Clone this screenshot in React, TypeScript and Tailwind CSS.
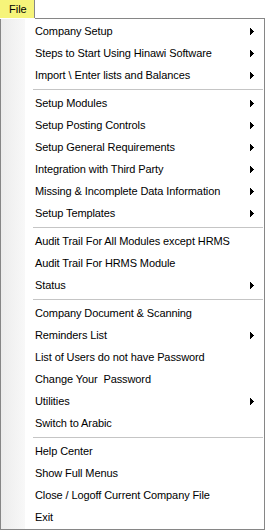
import React from "react";

type Item = { label: string; sub?: boolean };

const groups: Item[][] = [
  [
    { label: "Company Setup", sub: true },
    { label: "Steps to Start Using Hinawi Software", sub: true },
    { label: "Import \\ Enter lists and Balances", sub: true },
  ],
  [
    { label: "Setup Modules", sub: true },
    { label: "Setup Posting Controls", sub: true },
    { label: "Setup General Requirements", sub: true },
    { label: "Integration with Third Party", sub: true },
    { label: "Missing & Incomplete Data Information", sub: true },
    { label: "Setup Templates", sub: true },
  ],
  [
    { label: "Audit Trail For All Modules except HRMS" },
    { label: "Audit Trail For HRMS Module" },
    { label: "Status", sub: true },
  ],
  [
    { label: "Company Document & Scanning" },
    { label: "Reminders List", sub: true },
    { label: "List of Users do not have Password" },
    { label: "Change Your  Password" },
    { label: "Utilities", sub: true },
    { label: "Switch to Arabic" },
  ],
  [
    { label: "Help Center" },
    { label: "Show Full Menus" },
    { label: "Close / Logoff Current Company File" },
    { label: "Exit" },
  ],
];

function SubArrow() {
  return (
    <svg width="4" height="7" viewBox="0 0 4 7" shapeRendering="crispEdges">
      <polygon points="0,0 4,3.5 0,7" fill="#000" />
    </svg>
  );
}

function MenuRow({ item }: { item: Item }) {
  return (
    <div className="flex h-[22px] items-center justify-between pl-[10px] pr-[10px]">
      <span className="whitespace-pre leading-[22px] tracking-[-0.1px]">{item.label}</span>
      {item.sub && <SubArrow />}
    </div>
  );
}

export default function App() {
  return (
    <div className="w-[265px] h-[530px] bg-white text-[11px] text-black font-['Liberation_Sans',Arial,sans-serif]">
      {/* Menu bar */}
      <div className="flex h-[19px]">
        <div className="w-[35px] h-[18px] bg-[#f6f47a] border-r border-[#868686] pl-[9px] leading-[18px]">
          File
        </div>
        <div className="flex-1 border-b border-[#868686]" />
      </div>

      {/* Dropdown */}
      <div className="flex h-[511px] border-l border-r border-b border-[#868686]">
        <div className="w-[24px] bg-gradient-to-r from-[#ececec] to-[#f8f8f8]" />
        <div className="flex-1 py-px">
          {groups.map((group, gi) => (
            <div key={gi}>
              {gi > 0 && (
                <div className="h-[6px] flex items-center ml-[8px] mr-px">
                  <div className="h-px w-full bg-[#c5c5c5]" />
                </div>
              )}
              {group.map((item) => (
                <MenuRow key={item.label} item={item} />
              ))}
            </div>
          ))}
        </div>
      </div>
    </div>
  );
}
